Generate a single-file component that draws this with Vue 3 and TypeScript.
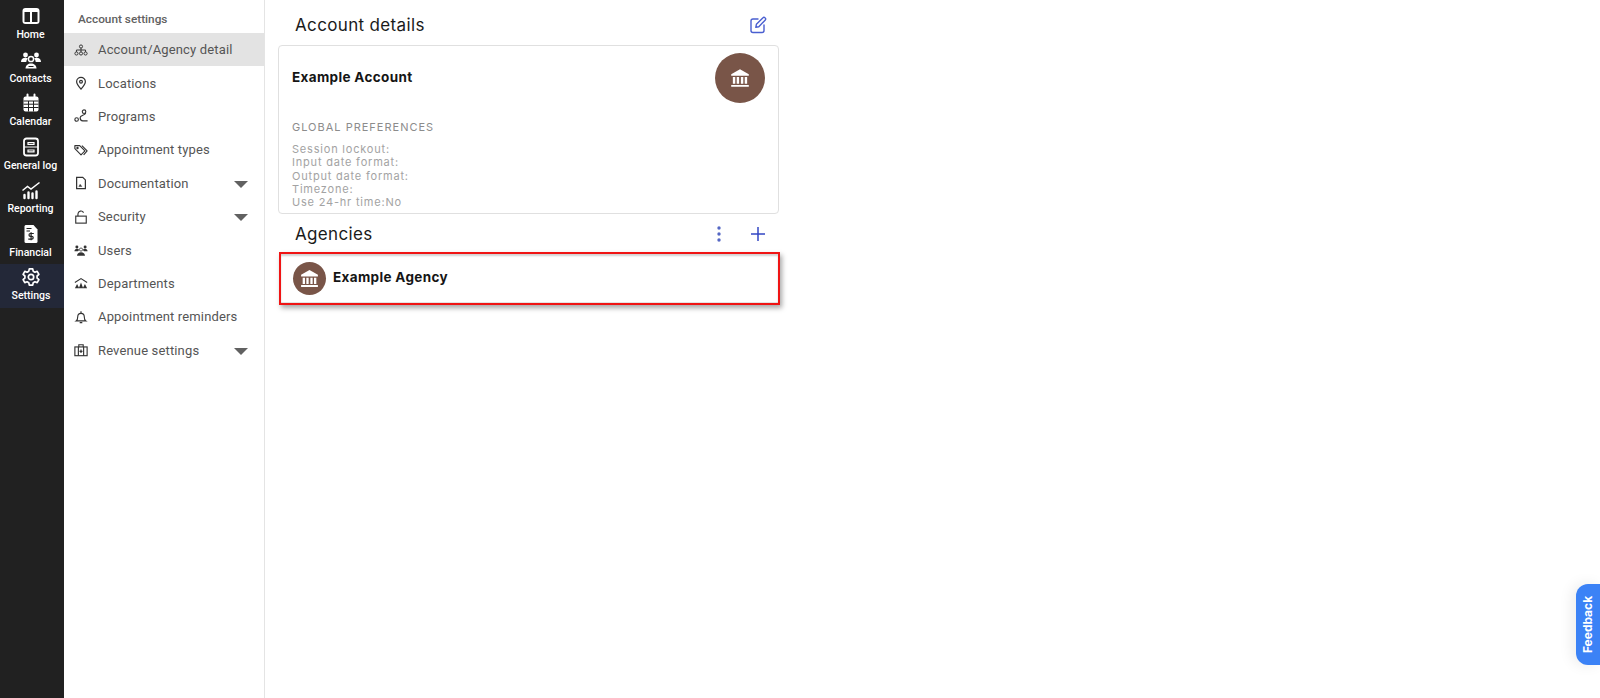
<script setup lang="ts">
interface RailItem { label: string; icon: string; active?: boolean }
interface NavItem { label: string; icon: string; active?: boolean; caret?: boolean }

const railItems: RailItem[] = [
  { label: 'Home', icon: 'home' },
  { label: 'Contacts', icon: 'contacts' },
  { label: 'Calendar', icon: 'calendar' },
  { label: 'General log', icon: 'log' },
  { label: 'Reporting', icon: 'reporting' },
  { label: 'Financial', icon: 'financial' },
  { label: 'Settings', icon: 'settings', active: true },
]

const navItems: NavItem[] = [
  { label: 'Account/Agency detail', icon: 'tree', active: true },
  { label: 'Locations', icon: 'pin' },
  { label: 'Programs', icon: 'route' },
  { label: 'Appointment types', icon: 'tags' },
  { label: 'Documentation', icon: 'doc', caret: true },
  { label: 'Security', icon: 'lock', caret: true },
  { label: 'Users', icon: 'users' },
  { label: 'Departments', icon: 'dept' },
  { label: 'Appointment reminders', icon: 'bell' },
  { label: 'Revenue settings', icon: 'hospital', caret: true },
]

const preferences: string[] = [
  'Session lockout:',
  'Input date format:',
  'Output date format:',
  'Timezone:',
  'Use 24-hr time:No',
]
</script>

<template>
  <div class="page">
    <aside class="rail">
      <div v-for="item in railItems" :key="item.label" class="rail-item" :class="{ active: item.active }">
        <svg class="rail-icon" viewBox="0 0 20 20" aria-hidden="true">
          <g v-if="item.icon === 'home'">
            <rect x="1.500" y="2" width="17" height="16" rx="3" fill="#fff" />
            <rect x="3.500" y="6" width="5.500" height="10" fill="#212121" />
            <rect x="11" y="6" width="5.500" height="10" fill="#212121" />
          </g>
          <g v-else-if="item.icon === 'contacts'" fill="#fff">
            <circle cx="4.500" cy="5" r="2.400" />
            <circle cx="15.500" cy="5" r="2.400" />
            <path d="M0 12c0-2.800 2-4.200 4.500-4.200 1 0 1.800.2 2.400.6-1 .8-1.500 2-1.600 3.600Z" />
            <path d="M20 12c0-2.800-2-4.200-4.500-4.200-1 0-1.800.2-2.400.6 1 .8 1.500 2 1.600 3.600Z" />
            <circle cx="10" cy="9" r="2.600" fill="none" stroke="#fff" stroke-width="1.500" />
            <path d="M4.500 18.500c0-3 2.500-5 5.500-5s5.500 2 5.500 5Z" />
            <path d="M7.500 16.500h5" stroke="#212121" stroke-width="1" />
          </g>
          <g v-else-if="item.icon === 'calendar'">
            <rect x="2.500" y="3.500" width="15" height="15" rx="2" fill="#fff" />
            <path d="M6.500 1.500v4M13.500 1.500v4" stroke="#fff" stroke-width="2" stroke-linecap="round" />
            <path d="M2.500 8h15M2.500 11.200h15M2.500 14.500h15M7.500 8v10.500M12.500 8v10.500" stroke="#212121" stroke-width="1" />
          </g>
          <g v-else-if="item.icon === 'log'" fill="none" stroke="#fff" stroke-width="1.800">
            <rect x="3" y="1.500" width="14" height="17" rx="2.500" />
            <path d="M3 10h14M7 5.500h6v1.800H7ZM7 13h6v1.800H7Z" stroke-width="1.200" />
          </g>
          <g v-else-if="item.icon === 'reporting'">
            <path d="M1.500 10.500l5-4 3.500 2.500 8.500-6.500" fill="none" stroke="#fff" stroke-width="1.500" />
            <path d="M3.500 15v3M7.500 12.500v5.500M11.500 13.500v4.500M15.500 11.500v6.500" stroke="#fff" stroke-width="2.400" stroke-linecap="round" />
          </g>
          <g v-else-if="item.icon === 'financial'">
            <path d="M4.500 1h8l4 4.500V17.500a1.500 1.500 0 0 1-1.500 1.500H5a1.500 1.500 0 0 1-1.500-1.500V2Z" fill="#fff" />
            <path d="M5.500 4.500h5M5.500 7h3.500" stroke="#212121" stroke-width="1.100" />
            <path d="M12.800 9.500H9.400a1.400 1.400 0 0 0 0 2.800h1.400a1.400 1.400 0 0 1 0 2.800H7.300M10.100 8.300v8" fill="none" stroke="#212121" stroke-width="1.200" />
          </g>
          <g v-else fill="none" stroke="#fff" stroke-width="1.700" stroke-linejoin="round">
            <path d="M8.300 1.800h3.400l.5 2.400 1.700 1 2.300-.8 1.700 3-1.800 1.600v2l1.800 1.600-1.700 3-2.300-.8-1.700 1-.5 2.400H8.300l-.5-2.400-1.700-1-2.300.8-1.700-3 1.800-1.600v-2L2.100 7.400l1.700-3 2.300.8 1.700-1Z" />
            <circle cx="10" cy="10" r="2.700" />
          </g>
        </svg>
        <span class="rail-label">{{ item.label }}</span>
      </div>
    </aside>

    <nav class="side">
      <div class="side-title">Account settings</div>
      <div v-for="item in navItems" :key="item.label" class="nav-row" :class="{ active: item.active }">
        <svg class="nav-icon" viewBox="0 0 16 16" aria-hidden="true">
          <g v-if="item.icon === 'tree'" fill="none" stroke="#333" stroke-width="1.100">
            <circle cx="8" cy="4" r="1.800" />
            <circle cx="2.800" cy="12" r="1.800" />
            <circle cx="8" cy="12" r="1.800" />
            <circle cx="13.200" cy="12" r="1.800" />
            <path d="M8 5.800v4.400M2.800 10.200V8h10.400v2.200" />
          </g>
          <g v-else-if="item.icon === 'pin'" fill="none" stroke="#333" stroke-width="1.400">
            <path d="M8 15c-3-3.500-5-6-5-8.500a5 5 0 0 1 10 0C13 9 11 11.500 8 15Z" />
            <circle cx="8" cy="6.500" r="1.600" />
          </g>
          <g v-else-if="item.icon === 'route'" fill="none" stroke="#333" stroke-width="1.300">
            <circle cx="3" cy="12" r="2" />
            <circle cx="11.500" cy="3" r="2" />
            <path d="M13.300 4.500C13 7.500 7 7 7 10c0 2 1.500 3.500 3 3.500h5.500" />
          </g>
          <g v-else-if="item.icon === 'tags'" fill="none" stroke="#333" stroke-width="1.300" stroke-linejoin="round">
            <path d="M1 3h5.500l6 6-4.500 4.500-7-7Z" />
            <path d="M9 3l6 6-4 4.500" />
            <circle cx="4" cy="5.700" r=".7" />
          </g>
          <g v-else-if="item.icon === 'doc'" fill="none" stroke="#333" stroke-width="1.400">
            <path d="M3 1.500h7l3 3v10H3Z" />
            <path d="M5.500 12l1.500-2.500L9 12Z" fill="#333" stroke-width=".5" />
          </g>
          <g v-else-if="item.icon === 'lock'" fill="none" stroke="#333" stroke-width="1.300">
            <rect x="2" y="7" width="12" height="8" />
            <path d="M4.500 7V4.500a3.400 3.400 0 0 1 6.400-1.500" />
          </g>
          <g v-else-if="item.icon === 'users'" fill="#333">
            <circle cx="3.300" cy="4.500" r="1.700" />
            <circle cx="12.700" cy="4.500" r="1.700" />
            <circle cx="8" cy="7.500" r="1.800" fill="none" stroke="#333" stroke-width=".9" />
            <path d="M.5 9.500c0-2 1.300-3 2.800-3s2.400.7 2.600 1.500L4.500 9.500ZM15.500 9.500c0-2-1.300-3-2.800-3s-2.400.7-2.600 1.500l1.400 1.500Z" />
            <path d="M3.500 14.500c0-2.500 2-4 4.500-4s4.500 1.500 4.500 4Z" />
          </g>
          <g v-else-if="item.icon === 'dept'">
            <path d="M1 7.500L8 3l7 4.500" fill="none" stroke="#333" stroke-width="1.200" />
            <path d="M1 14l2.500-5L6 14ZM5.500 14L8 7.500l2.500 6.500ZM10 14l2.500-5L15 14Z" fill="#333" />
          </g>
          <g v-else-if="item.icon === 'bell'" fill="none" stroke="#333" stroke-width="1.300">
            <path d="M2.500 12.500c1.500-1 1.800-2.500 1.800-5a3.700 3.700 0 0 1 7.400 0c0 2.500.3 4 1.800 5Z" />
            <path d="M6.500 14.500h3M8 1.500v2" />
          </g>
          <g v-else fill="none" stroke="#333" stroke-width="1.300">
            <rect x="1" y="4.500" width="14" height="10" />
            <path d="M5.500 4.500V2h5v2.500M5 4.500v10M11 4.500v10M8 7.500v4M6.300 9.500h3.400" />
          </g>
        </svg>
        <span class="nav-label">{{ item.label }}</span>
        <span v-if="item.caret" class="caret"></span>
      </div>
    </nav>

    <main class="main">
      <header class="section-head first">
        <h2>Account details</h2>
        <svg class="edit" viewBox="0 0 18 18" aria-hidden="true">
          <path d="M9 3H4a2 2 0 0 0-2 2v9.500a2 2 0 0 0 2 2h9a2 2 0 0 0 2-2V9" fill="none" stroke="#4a5fd0" stroke-width="1.400" stroke-linecap="round" />
          <path d="M6.800 11.300l.6-3L14 1.700a1.300 1.300 0 0 1 1.900 0l.4.400a1.300 1.300 0 0 1 0 1.900l-6.500 6.700Z" fill="none" stroke="#4a5fd0" stroke-width="1.400" stroke-linejoin="round" />
        </svg>
      </header>

      <section class="account-card">
        <div class="account-top">
          <strong class="name">Example Account</strong>
          <div class="avatar large">
            <svg viewBox="0 0 20 20" aria-hidden="true">
              <path d="M10 2L2 6.500V8h16V6.500Z M3.500 9.200h2.200v6H3.500Z M7 9.200h2.200v6H7Z M10.800 9.200H13v6h-2.200Z M14.300 9.200h2.200v6h-2.200Z M2 16.300h16V18H2Z" fill="#fff" />
            </svg>
          </div>
        </div>
        <div class="pref-title">GLOBAL PREFERENCES</div>
        <div class="pref-list">
          <div v-for="line in preferences" :key="line">{{ line }}</div>
        </div>
      </section>

      <header class="section-head second">
        <h2>Agencies</h2>
        <div class="head-actions">
          <svg class="dots" viewBox="0 0 4 16" aria-hidden="true">
            <circle cx="2" cy="2" r="1.700" />
            <circle cx="2" cy="8" r="1.700" />
            <circle cx="2" cy="14" r="1.700" />
          </svg>
          <svg class="plus" viewBox="0 0 14 14" aria-hidden="true">
            <path d="M7 0v14M0 7h14" fill="none" stroke="#3347c4" stroke-width="1.500" />
          </svg>
        </div>
      </header>

      <section class="agency-card">
        <div class="avatar small">
          <svg viewBox="0 0 20 20" aria-hidden="true">
            <path d="M10 2L2 6.500V8h16V6.500Z M3.500 9.200h2.200v6H3.500Z M7 9.200h2.200v6H7Z M10.800 9.200H13v6h-2.200Z M14.300 9.200h2.200v6h-2.200Z M2 16.300h16V18H2Z" fill="#fff" />
          </svg>
        </div>
        <strong class="name agency-name">Example Agency</strong>
      </section>
    </main>

    <button class="feedback" type="button"><span>Feedback</span></button>
  </div>
</template>

<style>
html, body { margin: 0; background: #fff; }
</style>

<style scoped>
.page {
  display: flex;
  width: 1600px;
  height: 698px;
  overflow: hidden;
  position: relative;
  background: #fff;
  font-family: Roboto, "Liberation Sans", sans-serif;
}
.rail {
  flex: 0 0 64px;
  background: #212121;
  padding-top: 3px;
  box-sizing: border-box;
}
.rail-item {
  height: 43.500px;
  display: flex;
  flex-direction: column;
  align-items: center;
  box-sizing: border-box;
  padding: 3px 3px 0 0;
}
.rail-item.active { background: #232838; padding-right: 2px; }
.rail-icon { width: 20px; height: 20px; display: block; }
.rail-label {
  color: #fff;
  font-size: 10.500px;
  font-weight: 500;
  line-height: 14px;
  margin-top: 2px;
  white-space: nowrap;
}
.side {
  flex: 0 0 201px;
  box-sizing: border-box;
  border-right: 1px solid #e4e4e4;
}
.side-title {
  height: 33px;
  box-sizing: border-box;
  padding: 12px 0 0 14px;
  font-size: 11.800px;
  line-height: 14px;
  font-weight: 500;
  color: #616161;
}
.nav-row {
  height: 33.400px;
  display: flex;
  align-items: center;
  padding: 0 16px 0 9.500px;
  color: #555;
}
.nav-row.active { background: #e3e3e3; }
.nav-icon { width: 14px; height: 14px; flex: none; margin-right: 10.500px; }
.nav-label { font-size: 13px; letter-spacing: .15px; flex: 1; white-space: nowrap; }
.caret {
  width: 0;
  height: 0;
  border-left: 7.500px solid transparent;
  border-right: 7.500px solid transparent;
  border-top: 7px solid #616161;
  margin-top: 2px;
}
.main {
  width: 501px;
  margin-left: 13px;
  font-family: Inter, "Open Sans", sans-serif;
}
.section-head {
  display: flex;
  align-items: center;
  justify-content: space-between;
  padding: 0 17px;
}
.section-head.first { height: 45px; padding-top: 4px; box-sizing: border-box; }
.section-head.second { height: 38px; padding-top: 1px; box-sizing: border-box; }
h2 {
  margin: 0;
  font-size: 17px;
  line-height: 22px;
  font-weight: 400;
  letter-spacing: .35px;
  color: #1a1a1a;
}
.edit { width: 18px; height: 18px; margin-right: -5px; }
.account-card {
  height: 169px;
  box-sizing: border-box;
  border: 1px solid #e0e0e0;
  border-radius: 4px;
  padding: 7px 13px 0 13px;
  overflow: hidden;
}
.account-top {
  display: flex;
  align-items: center;
  justify-content: space-between;
  height: 50px;
}
.name {
  font-size: 13.500px;
  font-weight: 700;
  letter-spacing: .35px;
  color: #151515;
  margin-top: -2px;
}
.agency-name { margin-top: -3px; }
.avatar {
  background: #795548;
  border-radius: 50%;
  display: flex;
  align-items: center;
  justify-content: center;
  flex: none;
}
.avatar.large { width: 50px; height: 50px; }
.avatar.large svg { width: 22px; height: 22px; }
.avatar.small { width: 33px; height: 33px; margin-right: 7px; }
.avatar.small svg { width: 21px; height: 21px; }
.pref-title {
  margin-top: 17px;
  font-size: 11px;
  line-height: 14px;
  letter-spacing: 1px;
  color: #8c8c8c;
  font-weight: 400;
}
.pref-list {
  margin-top: 9px;
  font-size: 11px;
  line-height: 13.300px;
  letter-spacing: .8px;
  color: #a3a3a3;
}
.head-actions { display: flex; align-items: center; gap: 29px; }
.dots { width: 4px; height: 16px; fill: #5567c4; margin-right: 1px; }
.plus { width: 14px; height: 14px; margin-right: -3px; }
.agency-card {
  display: flex;
  align-items: center;
  height: 53px;
  width: 501px;
  margin-left: 1px;
  box-sizing: border-box;
  border: 2px solid #f01414;
  padding: 0 0 0 12px;
  box-shadow: 2px 3px 5px rgba(0, 0, 0, .35), inset 0 2px 2px rgba(0, 0, 0, .18), inset 0 -1px 0 #e4e4e4;
}
.feedback {
  position: absolute;
  right: 0;
  top: 584px;
  width: 24px;
  height: 81px;
  padding: 0;
  border: 0;
  border-radius: 12px 0 0 12px;
  background: #3b82f6;
  box-shadow: -4px 0 14px rgba(0, 0, 0, .08);
  color: #fff;
  font-family: Inter, "Liberation Sans", sans-serif;
  font-size: 12px;
  font-weight: 700;
  display: flex;
  align-items: center;
  justify-content: center;
}
.feedback span { transform: rotate(-90deg); white-space: nowrap; display: block; }
</style>
